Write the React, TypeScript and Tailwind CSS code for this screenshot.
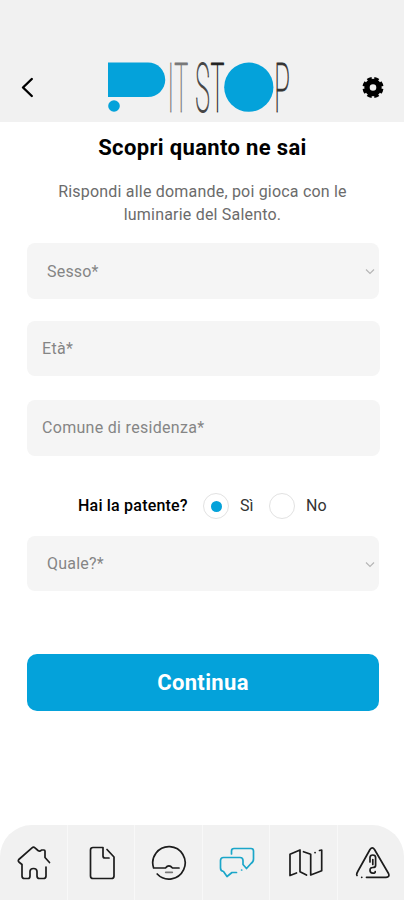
import { ReactNode } from 'react'

const letters = [
  { char: 'I', x: 170.8, scale: 0.34, color: '#777' },
  { char: 'T', x: 181.3, scale: 0.34, color: '#777' },
  { char: 'S', x: 202.6, scale: 0.36, color: '#444' },
  { char: 'T', x: 217.4, scale: 0.34, color: '#222' },
  { char: 'P', x: 282, scale: 0.38, color: '#333' },
]

function Logo() {
  return (
    <svg width="184" height="54" viewBox="107 60 184 54" className="overflow-visible" aria-label="Pit Stop">
      <path d="M108 62.5H148A17.2 17.2 0 0 1 148 97H108Z" fill="#04a2da" />
      <circle cx="114" cy="106" r="5.8" fill="#04a2da" />
      <circle cx="248.8" cy="87.2" r="24.6" fill="#04a2da" />
      {letters.map(({ char, x, scale, color }, i) => (
        <text
          key={i}
          transform={`translate(${x} 111.5) scale(${scale} 1)`}
          textAnchor="middle"
          fontSize="68.5"
          fontWeight="100"
          fill={color}
          stroke={color}
          strokeWidth="1"
          className="font-[Roboto,sans-serif]"
        >
          {char}
        </text>
      ))}
    </svg>
  )
}

function Header() {
  return (
    <header className="h-[122px] shrink-0 bg-[#f1f1f1] pt-[60px] pl-[21px] pr-5 flex items-start">
      <button aria-label="Indietro" className="mt-[17px]">
        <svg width="13" height="21" viewBox="0 0 13 21" fill="none" stroke="#000" strokeWidth="2.4" strokeLinecap="round" strokeLinejoin="round">
          <path d="M10.8 2 2 10.5l8.8 8.5" />
        </svg>
      </button>
      <div className="ml-[73px]">
        <Logo />
      </div>
      <button aria-label="Impostazioni" className="mt-4 ml-auto">
        <svg width="22" height="23" viewBox="-11 -11.5 22 23" fill="none" stroke="#000">
          <circle r="6" strokeWidth="5.4" />
          <circle r="9.2" strokeWidth="2.6" pathLength="80" strokeDasharray="6.4 3.6" strokeDashoffset="-1.8" />
        </svg>
      </button>
    </header>
  )
}

function Chevron() {
  return (
    <svg width="10" height="7" viewBox="0 0 10 7" fill="none" stroke="#b5b5b5" strokeWidth="1.1">
      <path d="m1 1.5 4 4 4-4" />
    </svg>
  )
}

function SelectField({ label, className }: { label: string; className: string }) {
  return (
    <div className={`w-[352px] rounded-lg bg-[#f5f5f5] pt-px pl-5 pr-1 flex items-center justify-between text-[#858585] tracking-[0.2px] ${className}`}>
      <span>{label}</span>
      <Chevron />
    </div>
  )
}

function TextField({ label, className }: { label: string; className: string }) {
  return (
    <div className={`w-[353px] rounded-lg bg-[#f5f5f5] pl-[15px] flex items-center text-[#858585] tracking-[0.3px] ${className}`}>
      {label}
    </div>
  )
}

function Radio({ checked }: { checked?: boolean }) {
  return (
    <span className="size-[26px] rounded-full border-[1.5px] border-[#e2e2e2] flex items-center justify-center">
      {checked && <span className="size-[11px] rounded-full bg-[#04a2da]" />}
    </span>
  )
}

const navItems: { name: string; active?: boolean; icon: ReactNode }[] = [
  {
    name: 'Home',
    icon: (
      <path d="M33.5 17.5 29 12.5V6Q29 5 28 5H25.5Q24 7 22 5.5L19 2.8Q17.5 1.5 16 2.8L2.8 14.5Q1.5 16 3.5 17.5L6 19.5V31Q6 33.5 8.5 33.5H12Q14 33.5 14 31V26.5Q14 23.5 17.5 23.5T21 26.5V31Q21 33.5 23.5 33.5H27.5Q30 33.5 30 31V22" />
    ),
  },
  {
    name: 'Documenti',
    icon: <path d="M23 4.5 30 12V31Q30 33.5 27.5 33.5H9Q6.5 33.5 6.5 31V5Q6.5 2.5 9 2.5H19V11Q19 13 21 13H25" />,
  },
  {
    name: 'Guida',
    icon: (
      <>
        <path d="M28 23H21.5Q17.8 18.8 14.5 23H2.6A16.2 16.2 0 1 1 6.2 29" />
        <path d="M14.7 27.3H21.3" stroke="#777" />
      </>
    ),
  },
  {
    name: 'Quiz',
    active: true,
    icon: (
      <>
        <path d="M12.5 9V6Q12.5 3.5 15 3.5H32Q34.5 3.5 34.5 6V14Q34.5 17 32 18.5L27.5 23.5 24 19.5V15.5Q24 12.5 21 12.5H4.5Q1.5 12.5 1.5 15.5V23Q1.5 26 4.5 26.5L8 31.5 13 27.5H17.5" />
        <path d="M22.6 25h.1" />
      </>
    ),
  },
  {
    name: 'Mappa',
    icon: (
      <>
        <path d="M9.5 28 3 30.5V9.3L13 5V26.7L19.5 30M16.5 6.7 23.7 9.3V30L34.7 25.7V5L32.5 5.5" />
        <path d="M28 7.6h.1" />
      </>
    ),
  },
  {
    name: 'Emergenza',
    icon: (
      <>
        <path d="M11.5 32.3H31Q35 32 33.5 28.5L19.5 4.5Q17.3 1.2 15 4.5L3 26Q1 29.5 2 30.5M6.7 32.3h.1" />
        <path d="M15 17V12.5Q15 10 17.8 10T20.6 12.5V20.5Q20.6 22.5 17.8 22.5T15 25.3 17.8 28.2 20.2 26.5M17.8 14.5V19.5" />
      </>
    ),
  },
]

function BottomNav() {
  return (
    <nav className="mt-auto h-[75px] shrink-0 rounded-t-[32px] bg-[#f1f1f1] flex overflow-hidden">
      {navItems.map(({ name, active, icon }) => (
        <a key={name} aria-label={name} className="w-[67.6px] shrink-0 pt-5 pl-0.5 flex justify-center border-r border-[#f8f8f8] last:border-r-0">
          <svg
            width="36"
            height="36"
            viewBox="0 0 36 36"
            fill="none"
            stroke={active ? '#1ba6c9' : '#1c1c1c'}
            strokeWidth="1.7"
            strokeLinecap="round"
            strokeLinejoin="round"
          >
            {icon}
          </svg>
        </a>
      ))}
    </nav>
  )
}

export default function App() {
  return (
    <div className="w-[404px] h-[900px] bg-white flex flex-col overflow-hidden font-[Roboto,sans-serif] text-base">
      <Header />
      <main className="flex flex-col pl-[27px]">
        <div className="w-[351px] text-center">
          <h1 className="mt-3 text-[22px] leading-7 font-bold text-black tracking-[0.35px]">Scopri quanto ne sai</h1>
          <p className="mt-[18px] leading-[23px] text-[#6b6b6b] tracking-[0.2px]">
            Rispondi alle domande, poi gioca con le
            <br />
            luminarie del Salento.
          </p>
        </div>

        <SelectField label="Sesso*" className="mt-[17px] h-14" />
        <TextField label="Età*" className="mt-[22px] h-[55px]" />
        <TextField label="Comune di residenza*" className="mt-6 h-14" />

        <div className="mt-[37px] ml-[51px] flex items-center text-[#333]">
          <span className="w-[125px] font-medium text-black tracking-[0.2px]">Hai la patente?</span>
          <Radio checked />
          <span className="ml-[11px] w-[29px]">Sì</span>
          <Radio />
          <span className="ml-[11px]">No</span>
        </div>

        <SelectField label="Quale?*" className="mt-[17px] h-[55px]" />

        <button className="mt-[63px] w-[352px] h-[57px] rounded-[10px] bg-[#04a2da] text-[22px] font-bold text-white tracking-[0.35px]">
          Continua
        </button>
      </main>
      <BottomNav />
    </div>
  )
}
